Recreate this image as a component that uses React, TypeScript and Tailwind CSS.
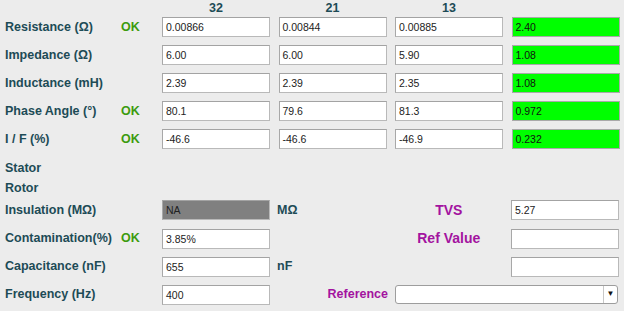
import React from "react";

const label = "text-[12.5px] font-bold text-[#1d4b56]";
const purple = "font-bold text-[#a3139f]";
const box =
  "h-[20px] w-[108px] shrink-0 border border-[#b9b9b9] border-t-[#a3a3a3] border-l-[#a8a8a8] bg-white px-[3px] text-[10.5px] leading-[18px] text-[#222]";
const greenBox =
  "h-[20px] w-[108px] shrink-0 border border-[#a9a9a9] bg-[#00ff00] px-[3px] text-[10.5px] leading-[18px] text-[#111]";

type Row = { name: string; ok: boolean; vals: string[]; total: string };

const rows: Row[] = [
  { name: "Resistance (Ω)", ok: true, vals: ["0.00866", "0.00844", "0.00885"], total: "2.40" },
  { name: "Impedance (Ω)", ok: false, vals: ["6.00", "6.00", "5.90"], total: "1.08" },
  { name: "Inductance (mH)", ok: false, vals: ["2.39", "2.39", "2.35"], total: "1.08" },
  { name: "Phase Angle (°)", ok: true, vals: ["80.1", "79.6", "81.3"], total: "0.972" },
  { name: "I / F (%)", ok: true, vals: ["-46.6", "-46.6", "-46.9"], total: "0.232" },
];

function Lead({ name, ok }: { name: string; ok?: boolean }) {
  return (
    <>
      <div className={`w-[116px] shrink-0 ${label}`}>{name}</div>
      <div className="w-[41px] shrink-0 text-[12.5px] font-bold text-[#3c9b0e]">{ok ? "OK" : ""}</div>
    </>
  );
}

export default function App() {
  return (
    <div
      className="h-[311px] w-[624px] overflow-hidden bg-[#ececec] pl-[5px]"
      style={{ fontFamily: '"Liberation Sans", Arial, sans-serif' }}
    >
      {/* column headers */}
      <div className="flex h-[17px] items-center gap-[8.5px] pl-[157px] text-[12.5px] font-bold text-[#1d4b56]">
        {["32", "21", "13", ""].map((h, i) => (
          <div key={i} className="w-[108px] text-center">
            {h}
          </div>
        ))}
      </div>

      {rows.map((r) => (
        <div key={r.name} className="flex h-[28px] items-start">
          <div className="flex h-[20px] items-center">
            <Lead name={r.name} ok={r.ok} />
          </div>
          <div className="flex gap-[8.5px]">
            {r.vals.map((v, i) => (
              <div key={i} className={box}>
                {v}
              </div>
            ))}
            <div className={greenBox}>{r.total}</div>
          </div>
        </div>
      ))}

      <div className={`flex h-[21px] items-center pt-[1px] ${label}`}>Stator</div>
      <div className={`flex h-[20px] items-center ${label}`}>Rotor</div>

      <div className="mt-[2px] flex h-[28.5px] items-start">
        <div className="flex h-[20px] items-center">
          <Lead name="Insulation (MΩ)" />
        </div>
        <div className={`${box} !bg-[#808080] border-[#6a6a6a]`}>NA</div>
        <div className="flex h-[20px] flex-1 items-center">
          <div className={`w-[116.5px] pl-[7px] ${label}`}>MΩ</div>
          <div className={`flex-1 text-center text-[14px] ${purple}`}>TVS</div>
        </div>
        <div className={box}>5.27</div>
        <div className="w-[5px]" />
      </div>

      <div className="flex h-[28px] items-start">
        <div className="flex h-[20px] items-center">
          <Lead name="Contamination(%)" ok />
        </div>
        <div className={box}>3.85%</div>
        <div className="flex h-[20px] flex-1 items-center">
          <div className="w-[116.5px]" />
          <div className={`flex-1 text-center text-[14px] ${purple}`}>Ref Value</div>
        </div>
        <div className={box}></div>
        <div className="w-[5px]" />
      </div>

      <div className="flex h-[28px] items-start">
        <div className="flex h-[20px] items-center">
          <Lead name="Capacitance (nF)" />
        </div>
        <div className={box}>655</div>
        <div className="flex h-[20px] flex-1 items-center">
          <div className={`pl-[7px] ${label}`}>nF</div>
        </div>
        <div className={box}></div>
        <div className="w-[5px]" />
      </div>

      <div className="flex h-[28px] items-start">
        <div className="flex h-[20px] items-center">
          <Lead name="Frequency (Hz)" />
        </div>
        <div className={box}>400</div>
        <div className="flex h-[20px] flex-1 items-center justify-end pr-[7px]">
          <div className={`text-[12.5px] ${purple}`}>Reference</div>
        </div>
        <div className="flex h-[19px] w-[223px] shrink-0 items-stretch overflow-hidden rounded-[3px] border border-[#9d9d9d] bg-white">
          <div className="flex-1" />
          <div className="flex w-[14px] items-center justify-center border-l border-[#c8c8c8] text-[8px] text-[#111]">
            ▼
          </div>
        </div>
        <div className="w-[6px]" />
      </div>
    </div>
  );
}
